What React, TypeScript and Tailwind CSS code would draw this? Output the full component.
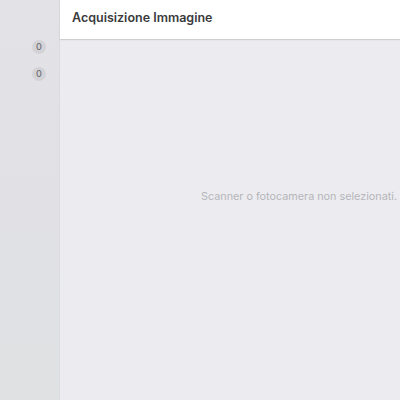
export default function App() {
  const counts = [0, 0];
  return (
    <div
      className="flex h-[400px] w-[400px] overflow-hidden bg-[#ececf0]"
      style={{ fontFamily: "Inter, 'Liberation Sans', sans-serif" }}
    >
      {/* Sidebar */}
      <aside className="flex w-[60px] shrink-0 flex-col border-r border-[#dcdce0] bg-gradient-to-b from-[#e3e3e7] via-[#e1e1e5] to-[#dfe1e3]">
        <div className="h-[39px]" />
        <div className="flex flex-col items-end gap-[13px] pr-[13px] pt-[1px]">
          {counts.map((c, i) => (
            <span
              key={i}
              className="flex h-[14px] w-[14px] items-center justify-center rounded-full bg-[#d3d3d7] text-[9px] font-medium text-[#6e6e73]"
            >
              {c}
            </span>
          ))}
        </div>
      </aside>

      {/* Main */}
      <main className="flex flex-1 flex-col">
        <header className="flex h-[39px] shrink-0 items-center bg-white pb-[3px] pl-[12px] shadow-[0_1px_1px_rgba(0,0,0,0.12)]">
          <h1 className="text-[12.5px] font-semibold text-[#3a3a3c]">Acquisizione Immagine</h1>
        </header>
        <div className="flex flex-1 items-center justify-end pb-[44px] pr-[3px]">
          <p className="whitespace-nowrap text-[10.8px] text-[#b5b5ba]">
            Scanner o fotocamera non selezionati.
          </p>
        </div>
      </main>
    </div>
  );
}
